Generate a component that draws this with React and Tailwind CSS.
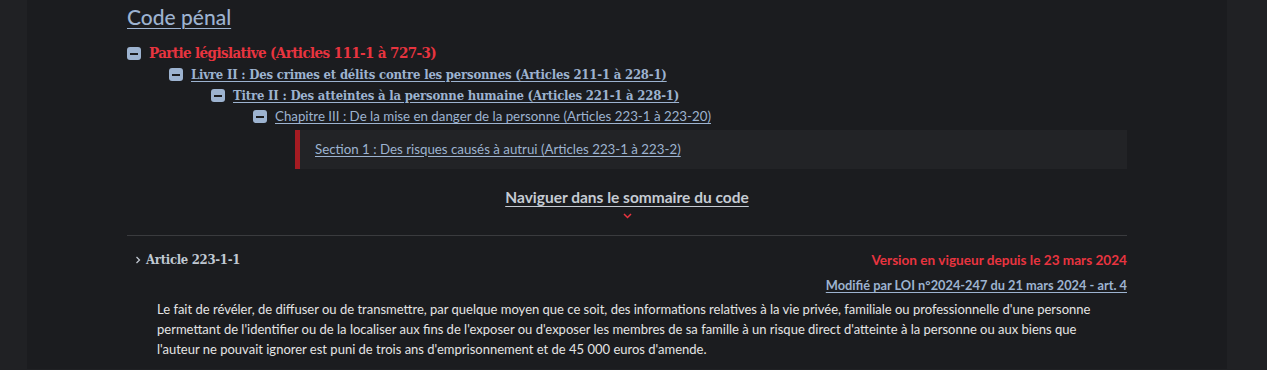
import React from "react";

const MinusBox = () => (
	<span className="inline-flex w-[14px] h-[13px] rounded-[3px] bg-[#9db3d0] items-center justify-center shrink-0">
		<span className="block w-[8px] h-[2px] bg-[#1b1c1f]" />
	</span>
);

const TreeRow = ({ indent, children }) => (
	<div className={`flex items-center gap-[8px] ${indent}`}>
		<MinusBox />
		{children}
	</div>
);

export default function App() {
	return (
		<div className="min-h-screen bg-[#202124] font-['Lato','Noto_Sans',sans-serif]">
			<div className="ml-[27px] w-[1200px] bg-[#1b1c1f] px-[100px] pt-[3px] pb-[10px]">
				<h1 className="text-[21px] leading-[28px] font-medium text-[#9db3d0] underline underline-offset-[3px] decoration-1 inline-block">
					Code pénal
				</h1>

				<div className="mt-[12px] font-['DejaVu_Serif_Condensed','DejaVu_Serif',serif]">
					<TreeRow indent="ml-0">
						<span className="text-[15px] leading-[21px] tracking-[-0.6px] font-bold text-[#e8343f]">
							Partie législative (Articles 111-1 à 727-3)
						</span>
					</TreeRow>
					<TreeRow indent="ml-[42px]">
						<a className="text-[13px] leading-[21px] tracking-[-0.2px] font-bold text-[#9db3d0] underline underline-offset-2">
							Livre II : Des crimes et délits contre les personnes (Articles 211-1 à 228-1)
						</a>
					</TreeRow>
					<TreeRow indent="ml-[84px]">
						<a className="text-[13px] leading-[21px] tracking-[-0.2px] font-bold text-[#9db3d0] underline underline-offset-2">
							Titre II : Des atteintes à la personne humaine (Articles 221-1 à 228-1)
						</a>
					</TreeRow>
					<TreeRow indent="ml-[126px]">
						<a className="font-['Lato','Noto_Sans',sans-serif] text-[13.3px] leading-[21px] text-[#9db3d0] underline underline-offset-2">
							Chapitre III : De la mise en danger de la personne (Articles 223-1 à 223-20)
						</a>
					</TreeRow>
				</div>

				<div className="ml-[168px] mt-[3px] h-[39px] bg-[#222326] border-l-[5px] border-[#a51b22] flex items-center pl-[15px]">
					<a className="text-[13.3px] text-[#9db3d0] underline underline-offset-2">
						Section 1 : Des risques causés à autrui (Articles 223-1 à 223-2)
					</a>
				</div>

				<div className="flex flex-col items-center mt-[18px]">
					<a className="text-[15.5px] leading-[20px] font-bold text-[#c5cbd3] underline underline-offset-[3px]">
						Naviguer dans le sommaire du code
					</a>
					<svg width="9" height="6" viewBox="0 0 9 6" className="mt-[6px]">
						<path d="M1 1l3.5 3.5L8 1" fill="none" stroke="#e8343f" strokeWidth="1.5" />
					</svg>
				</div>

				<div className="mt-[16px] border-t border-[#3a3b3e]" />

				<div className="flex justify-between items-start mt-[14px]">
					<div className="flex items-center gap-[5px] pl-[8px]">
						<svg width="6" height="8" viewBox="0 0 6 8">
							<path d="M1.5 1l3 3-3 3" fill="none" stroke="#c0c7d0" strokeWidth="1.3" />
						</svg>
						<span className="font-['DejaVu_Serif_Condensed','DejaVu_Serif',serif] text-[13px] leading-[20px] tracking-[-0.3px] font-bold text-[#c0c8d2]">
							Article 223-1-1
						</span>
					</div>
					<div className="flex flex-col items-end">
						<span className="text-[13.6px] leading-[20px] font-bold text-[#e8343f]">
							Version en vigueur depuis le 23 mars 2024
						</span>
						<a className="mt-[5px] text-[12.8px] leading-[20px] font-bold text-[#9db3d0] underline underline-offset-2">
							Modifié par LOI n°2024-247 du 21 mars 2024 - art. 4
						</a>
					</div>
				</div>

				<p className="mt-[4px] pl-[30px] pr-[10px] text-[13px] leading-[20px] text-[#e4e4e4]">
					Le fait de révéler, de diffuser ou de transmettre, par quelque moyen que ce soit, des informations relatives à la vie privée, familiale ou professionnelle d'une personne permettant de l'identifier ou de la localiser aux fins de l'exposer ou d'exposer les membres de sa famille à un risque direct d'atteinte à la personne ou aux biens que l'auteur ne pouvait ignorer est puni de trois ans d'emprisonnement et de 45 000 euros d'amende.
				</p>
			</div>
		</div>
	);
}
